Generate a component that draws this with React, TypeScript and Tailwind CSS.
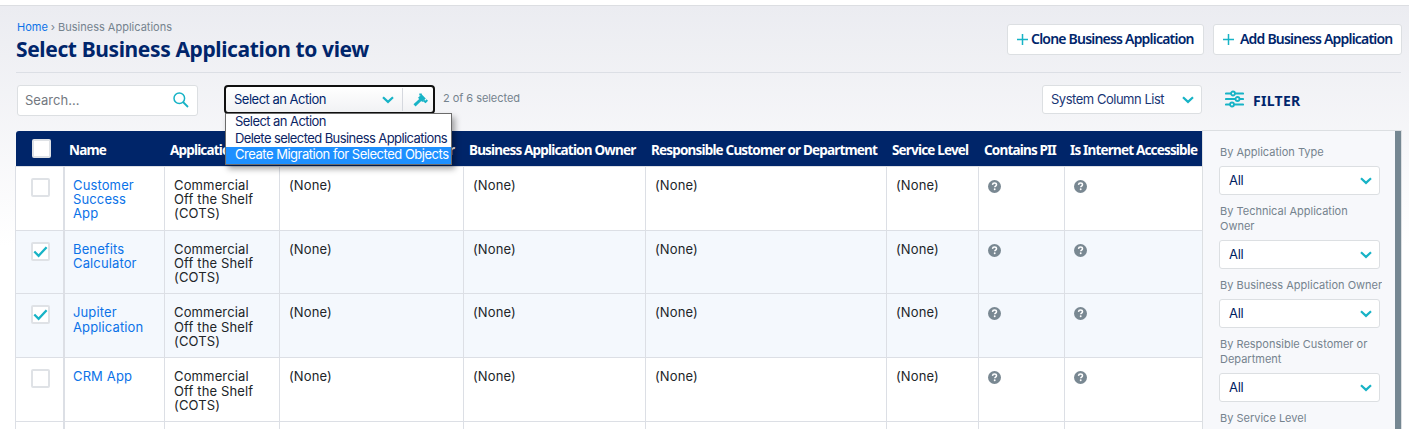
import React from "react";

const columns = [
  { label: "Name", kind: "name" },
  { label: "Application Type", kind: "type" },
  { label: "Technical Application Owner", kind: "none" },
  { label: "Business Application Owner", kind: "none" },
  { label: "Responsible Customer or Department", kind: "none" },
  { label: "Service Level", kind: "none" },
  { label: "Contains PII", kind: "flag" },
  { label: "Is Internet Accessible", kind: "flag" },
];

const rows = [
  { name: ["Customer", "Success", "App"], checked: false, height: "h-[64px] leading-[14px]" },
  { name: ["Benefits", "Calculator"], checked: true, height: "h-[63px] leading-[14px]" },
  { name: ["Jupiter", "Application"], checked: true, height: "h-[64px] leading-[14.5px]" },
  { name: ["CRM App"], checked: false, height: "h-[64px] leading-[14.5px]" },
  { name: [], checked: null, height: "h-[64px]" },
];

const grid = "grid grid-cols-[48px_101px_115px_184px_182px_241px_92px_86px_138px]";

function Chevron() {
  return (
    <svg width="12" height="8" viewBox="0 0 12 8" className="shrink-0">
      <path d="M1 1.200 6 5.900l5-4.700" fill="none" stroke="#17b3c6" strokeWidth="2.2" />
    </svg>
  );
}

function Plus() {
  return (
    <svg width="11" height="11" viewBox="0 0 11 11" className="shrink-0">
      <path d="M5.5 0v11M0 5.5h11" stroke="#17b3c6" strokeWidth="1.5" />
    </svg>
  );
}

function Help() {
  return (
    <svg width="13" height="13" viewBox="0 0 13 13" className="mt-[2px] block">
      <circle cx="6.5" cy="6.5" r="6.5" fill="#798892" />
      <path
        d="M4.5 4.9c.1-1.3.9-1.8 2-1.8s2 .7 2 1.7c0 1.3-1.7 1.3-1.7 2.5"
        fill="none"
        stroke="#fff"
        strokeWidth="1.5"
      />
      <circle cx="6.7" cy="9.3" r="0.95" fill="#fff" />
    </svg>
  );
}

function Hammer() {
  return (
    <svg width="15" height="14" viewBox="0 0 15 14" className="ml-[10px]">
      <g fill="none" stroke="#17b3c6">
        <path d="M1.500 12.300 7.800 6.500" strokeWidth="3" />
        <path d="M6.800 3 11 7.200" strokeWidth="5" />
        <path d="M6.300 1.400h2.500M10.500 7.500l2 1.500 1.800-2" strokeWidth="2" />
      </g>
    </svg>
  );
}

function Checkbox({ checked }: { checked: boolean }) {
  return (
    <div className="flex size-[19px] items-center justify-center rounded-[2px] border-2 border-[#dfe2e6] bg-white">
      {checked && (
        <svg width="15" height="13" viewBox="0 0 15 13" className="shrink-0">
          <path d="M1.3 6.5 5.6 10.8 13.6 2.2" fill="none" stroke="#17b3c6" strokeWidth="2.3" />
        </svg>
      )}
    </div>
  );
}

function FilterField({ lines }: { lines: string[] }) {
  return (
    <div>
      <div className="pl-px text-[11px] leading-[15px] text-[#75838e]">
        {lines.map((line) => (
          <div key={line} className="whitespace-nowrap">{line}</div>
        ))}
      </div>
      <div className="mt-[6px] mb-[9px] flex h-[29px] w-[161px] items-center justify-between rounded-[3px] border border-[#dcdfe2] bg-white pr-[7px] pl-[9px] text-[13px] text-[#00205f]">
        <span className="tracking-[-0.3px]">All</span>
        <Chevron />
      </div>
    </div>
  );
}

function ActionMenu() {
  return (
    <div className="absolute top-[28px] left-px w-[227px] border border-[#6b6b6b] bg-white text-[13px] text-[#0b2464] shadow-[3px_4px_6px_rgba(0,0,0,0.35)]">
      <div className="h-[17px] pl-[9px] leading-[15px] whitespace-nowrap"><span className="tracking-[-0.56px]">Select an Action</span></div>
      <div className="h-[16px] pl-[9px] leading-[15px] whitespace-nowrap"><span className="tracking-[-0.58px]">Delete selected Business Applications</span></div>
      <div className="h-[17px] bg-[#1e90ff] pl-[9px] leading-[15px] whitespace-nowrap text-white"><span className="tracking-[-0.48px]">Create Migration for Selected Objects</span></div>
    </div>
  );
}

export default function App() {
  return (
    <div className="h-[429px] w-[1409px] overflow-hidden bg-white pt-[5px] font-['Inter',sans-serif] text-[13px]">
      <div className="h-[424px] border-t border-[#dcdee2] bg-linear-to-b from-[#ebecf1] to-white to-[240px]">
        <header className="mr-[8px] ml-[16px] flex h-[67px] justify-between border-b border-[#dcdfe5]">
          <div className="pt-[14px]">
            <nav className="flex h-[15px] items-center gap-[3px] pl-px text-[11px] leading-[15px] text-[#75838e]">
              <a className="text-[#0b72e8]">Home</a>
              <span>›</span>
              <span>Business Applications</span>
            </nav>
            <h1 className="mt-px text-[21px] leading-[26px] font-bold whitespace-nowrap text-[#00256b] font-['Noto_Sans',sans-serif] tracking-[-0.38px]">
              Select Business Application to view
            </h1>
          </div>
          <div className="-mr-px flex gap-[9px] pt-[18px] font-['Noto_Sans',sans-serif] text-[14px] font-semibold tracking-[-0.79px] whitespace-nowrap text-[#00256b]">
            <button className="flex h-[31px] w-[197px] items-center gap-[3px] rounded-[3px] border border-[#dcdfe2] bg-white pl-[9px]">
              <Plus /> <span className="-mt-[2px]">Clone Business Application</span>
            </button>
            <button className="flex h-[31px] w-[189px] items-center gap-[6px] rounded-[3px] border border-[#dcdfe2] bg-white pl-[9px]">
              <Plus /> <span className="-mt-[2px]">Add Business Application</span>
            </button>
          </div>
        </header>

        <div className="flex h-[58px] items-start pt-[12px] pl-[17px]">
          <div className="flex h-[31px] w-[181px] items-center justify-between rounded-[3px] border border-[#dcdfe2] bg-white pr-[8px] pl-[7px] text-[#737880]">
            <span>Search...</span>
            <svg width="16" height="16" viewBox="0 0 16 16" className="-mt-[2px]">
              <circle cx="6.3" cy="6.3" r="5.3" fill="none" stroke="#17b3c6" strokeWidth="1.5" />
              <path d="m10 10 5 5" stroke="#17b3c6" strokeWidth="1.8" />
            </svg>
          </div>
          <div className="relative z-10 ml-[26px] flex h-[29px] w-[211px] items-center rounded-[4px] border-2 border-[#101010] bg-linear-to-b from-white to-[#f1f2f4] text-[#00256b]">
            <div className="flex h-[23px] w-[177px] items-center justify-between border-r border-[#d5d8de] pr-[8px] pl-[8px]">
              <span className="tracking-[-0.5px]">Select an Action</span>
              <Chevron />
            </div>
            <Hammer />
            <div className="absolute -top-[2px] -left-[2px]">
              <ActionMenu />
            </div>
          </div>
          <span className="ml-[8px] pt-[5px] text-[11px] leading-[17px] tracking-[-0.05px] text-[#75838e]">2 of 6 selected</span>
          <div className="ml-auto flex h-[29px] w-[160px] items-center justify-between rounded-[3px] border border-[#dcdfe2] bg-white pr-[7px] pl-[8px] text-[#183575]">
            <span className="tracking-[-0.48px]">System Column List</span>
            <Chevron />
          </div>
          <div className="flex w-[207px] items-center gap-[9px] pt-[5px] pl-[23px] font-['Noto_Sans',sans-serif] text-[14px] font-bold tracking-[0.3px] text-[#00256b]">
            <svg width="19" height="18" viewBox="0 0 19 18" fill="none" stroke="#17b3c6" strokeWidth="2.1" className="-mt-[3px]">
              <path d="M1 3.500H6M10.500 3.500H18M1 9H10M15 9H18M1 14.500H4.500M9.500 14.500H18" strokeLinecap="round" />
              <circle cx="8" cy="3.500" r="2" strokeWidth="1.800" />
              <circle cx="12.500" cy="9" r="2" strokeWidth="1.800" />
              <circle cx="7" cy="14.500" r="2" strokeWidth="1.800" />
            </svg>
            FILTER
          </div>
        </div>

        <main className="ml-[15px] flex h-[299px] w-[1387px]">
          <section className="w-[1187px] shrink-0 overflow-hidden">
            <div className={`${grid} ml-px h-[35px] w-[1187px] rounded-tl-[3px] bg-[#002569] text-white`}>
              <div className="pt-[8px] pl-[16px]"><Checkbox checked={false} /></div>
              {columns.map((c) => (
                <div key={c.label} className="-ml-px min-w-0 pt-[9px] pl-[6px] font-['Noto_Sans',sans-serif] text-[13.5px] leading-[20px] font-bold tracking-[-0.82px] whitespace-nowrap">
                  {c.label}
                </div>
              ))}
            </div>
            {rows.map((row, r) => (
              <div key={r} className={`${grid} ${row.height} border-t border-[#dcdfe5] text-[#212529] ${row.checked ? "bg-[#f4f8fd]" : "bg-white"}`}>
                <div className="border-l border-[#dcdfe5] pt-[11px] pl-[15px]">
                  {row.checked !== null && <Checkbox checked={row.checked} />}
                </div>
                {columns.map((c) => (
                  <div
                    key={c.label}
                    className={c.kind === "name" ? "border-l-2 border-[#dcdfe5] pt-[11px] pl-[8px]" : "border-l border-[#dcdfe5] pt-[11px] pl-[9px]"}
                  >
                    {row.checked !== null && c.kind === "name" && (
                      <div className="tracking-[0.13px] text-[#0b72e8]">{row.name.map((n) => <div key={n}>{n}</div>)}</div>
                    )}
                    {row.checked !== null && c.kind === "type" && (
                      <div className="tracking-[0.14px] whitespace-nowrap">
                        <div>Commercial</div>
                        <div>Off the Shelf</div>
                        <div>(COTS)</div>
                      </div>
                    )}
                    {row.checked !== null && c.kind === "none" && <span className="tracking-[0.1px]">(None)</span>}
                    {row.checked !== null && c.kind === "flag" && <Help />}
                  </div>
                ))}
              </div>
            ))}
          </section>
          <aside className="-mt-px flex h-[299px] w-[200px] justify-between border-t border-r border-l border-[#dcdfe2] bg-[#f7f8fb]">
            <div className="overflow-hidden pt-[14px] pl-[16px]">
              <FilterField lines={["By Application Type"]} />
              <FilterField lines={["By Technical Application", "Owner"]} />
              <FilterField lines={["By Business Application Owner"]} />
              <FilterField lines={["By Responsible Customer or", "Department"]} />
              <div className="pl-px text-[11px] leading-[15px] text-[#75838e]">By Service Level</div>
            </div>
            <div className="w-[6px] shrink-0 bg-[#758792]" />
          </aside>
        </main>
      </div>
    </div>
  );
}
